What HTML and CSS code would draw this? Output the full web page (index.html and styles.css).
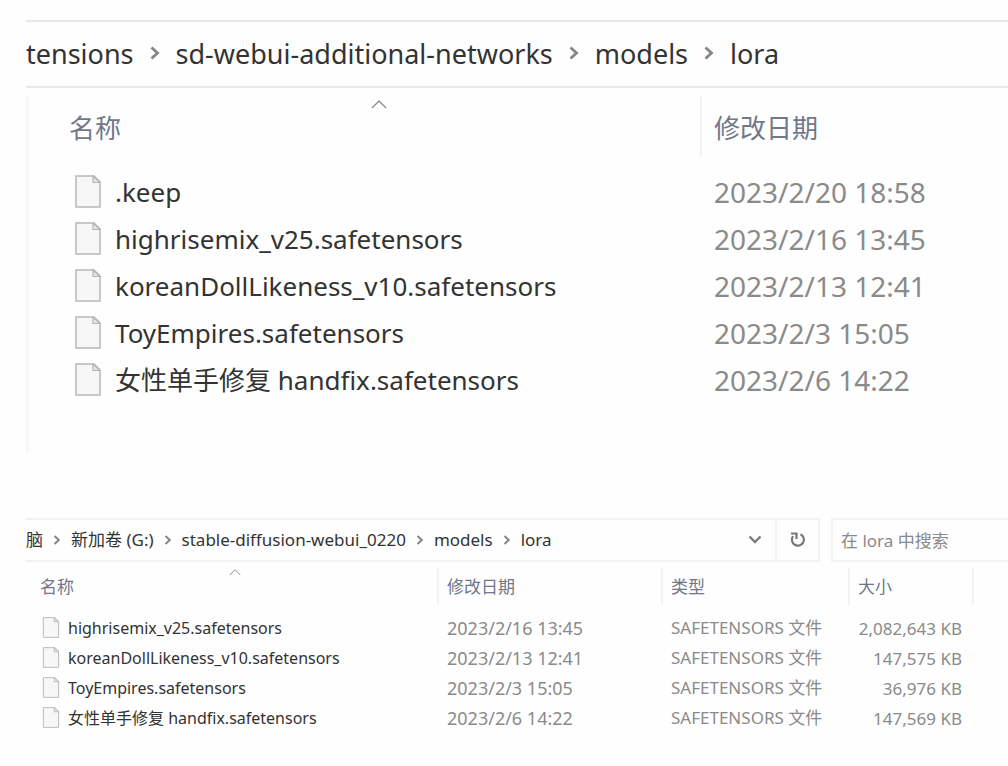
FILE: index.html
```html
<!DOCTYPE html>
<html lang="zh-CN">
<head>
<meta charset="utf-8">
<meta name="viewport" content="width=device-width, initial-scale=1">
<title>lora</title>
<link rel="stylesheet" href="styles.css">
</head>
<body>
<svg class="defs" aria-hidden="true">
  <symbol id="file" viewBox="0 0 26 33">
    <path d="M1 1H19L25 7V32H1Z" fill="#f7f7f7" stroke="#b8b8b8" stroke-width="1.5"/>
    <path d="M18 1V7.500H25Z" fill="#e6e6e6" stroke="#b4b4b4" stroke-width="1.2"/>
  </symbol>
  <symbol id="chev" viewBox="0 0 10 14">
    <path d="M1.500 1.500L7.500 7L1.500 12.500" fill="none" stroke="#858585" stroke-width="2.800"/>
  </symbol>
  <symbol id="sort" viewBox="0 0 16 10">
    <path d="M1 9L8 2L15 9" fill="none" stroke="#8a8a8a" stroke-width="1.300"/>
  </symbol>
</svg>

<main class="page">
  <section class="explorer large">
    <div class="toolbar">
      <nav class="address" aria-label="路径">
        <a href="#">tensions</a>
        <svg class="chev"><use href="#chev"/></svg>
        <a href="#">sd-webui-additional-networks</a>
        <svg class="chev"><use href="#chev"/></svg>
        <a href="#">models</a>
        <svg class="chev"><use href="#chev"/></svg>
        <a href="#">lora</a>
      </nav>
    </div>
    <div class="listing">
      <table class="files">
        <colgroup><col class="col-name"><col class="col-date"></colgroup>
        <thead>
          <tr>
            <th><button type="button" class="head"><svg class="sort"><use href="#sort"/></svg>名称</button></th>
            <th><button type="button" class="head">修改日期</button></th>
          </tr>
        </thead>
        <tbody>
          <tr><td class="name"><svg class="file"><use href="#file"/></svg><span>.keep</span></td><td class="date">2023/2/20 18:58</td></tr>
          <tr><td class="name"><svg class="file"><use href="#file"/></svg><span>highrisemix_v25.safetensors</span></td><td class="date">2023/2/16 13:45</td></tr>
          <tr><td class="name"><svg class="file"><use href="#file"/></svg><span>koreanDollLikeness_v10.safetensors</span></td><td class="date">2023/2/13 12:41</td></tr>
          <tr><td class="name"><svg class="file"><use href="#file"/></svg><span>ToyEmpires.safetensors</span></td><td class="date">2023/2/3 15:05</td></tr>
          <tr><td class="name"><svg class="file"><use href="#file"/></svg><span>女性单手修复 handfix.safetensors</span></td><td class="date">2023/2/6 14:22</td></tr>
        </tbody>
      </table>
    </div>
  </section>

  <section class="explorer small">
    <div class="toolbar">
      <nav class="address" aria-label="路径">
        <a href="#">脑</a>
        <svg class="chev"><use href="#chev"/></svg>
        <a href="#">新加卷 (G:)</a>
        <svg class="chev"><use href="#chev"/></svg>
        <a href="#">stable-diffusion-webui_0220</a>
        <svg class="chev"><use href="#chev"/></svg>
        <a href="#">models</a>
        <svg class="chev"><use href="#chev"/></svg>
        <a href="#">lora</a>
        <button type="button" class="history" aria-label="历史记录">
          <svg width="14" height="10" viewBox="0 0 14 10"><path d="M1.500 1.500L7 7L12.500 1.500" fill="none" stroke="#7a7a7a" stroke-width="2.400"/></svg>
        </button>
      </nav>
      <button type="button" class="refresh" aria-label="刷新">
        <svg width="18" height="18" viewBox="0 0 18 18"><path d="M11.500 3.300A6 6 0 1 1 4 5.200" fill="none" stroke="#777" stroke-width="2.200"/><path d="M2 2.500H7.500V8" fill="none" stroke="#777" stroke-width="2.200"/></svg>
      </button>
      <input class="search" type="search" aria-label="搜索" placeholder="在 lora 中搜索">
    </div>
    <div class="listing">
      <table class="files">
        <colgroup><col class="col-name"><col class="col-date"><col class="col-type"><col class="col-size"><col></colgroup>
        <thead>
          <tr>
            <th><button type="button" class="head"><svg class="sort"><use href="#sort"/></svg>名称</button></th>
            <th><button type="button" class="head">修改日期</button></th>
            <th><button type="button" class="head">类型</button></th>
            <th><button type="button" class="head">大小</button></th>
            <td><div class="head"></div></td>
          </tr>
        </thead>
        <tbody>
          <tr><td class="name"><svg class="file"><use href="#file"/></svg><span>highrisemix_v25.safetensors</span></td><td class="date">2023/2/16 13:45</td><td>SAFETENSORS 文件</td><td class="size">2,082,643 KB</td><td></td></tr>
          <tr><td class="name"><svg class="file"><use href="#file"/></svg><span>koreanDollLikeness_v10.safetensors</span></td><td class="date">2023/2/13 12:41</td><td>SAFETENSORS 文件</td><td class="size">147,575 KB</td><td></td></tr>
          <tr><td class="name"><svg class="file"><use href="#file"/></svg><span>ToyEmpires.safetensors</span></td><td class="date">2023/2/3 15:05</td><td>SAFETENSORS 文件</td><td class="size">36,976 KB</td><td></td></tr>
          <tr><td class="name"><svg class="file"><use href="#file"/></svg><span>女性单手修复 handfix.safetensors</span></td><td class="date">2023/2/6 14:22</td><td>SAFETENSORS 文件</td><td class="size">147,569 KB</td><td></td></tr>
        </tbody>
      </table>
    </div>
  </section>
</main>
</body>
</html>
```

FILE: styles.css
```css
* { box-sizing: border-box; }
body {
  margin: 0;
  background: #fefefe;
  color: #333;
  font-family: "Noto Sans", "Noto Sans CJK SC", sans-serif;
}
.defs { position: absolute; width: 0; height: 0; }
.page {
  display: flex;
  flex-direction: column;
  gap: 64px;
  padding: 20px 0 0 26px;
}
a { color: inherit; text-decoration: none; }
button {
  border: 0;
  padding: 0;
  background: none;
  color: inherit;
  font: inherit;
}
.toolbar { display: flex; }
.address {
  flex: 1;
  min-width: 0;
  display: flex;
  align-items: center;
  white-space: nowrap;
  line-height: 1;
  border: solid #e8e8e8;
  border-width: 2px 0;
}
.chev, .file { flex: none; }
.files {
  width: 100%;
  table-layout: fixed;
  border-collapse: collapse;
  white-space: nowrap;
  line-height: 1;
}
th, td { padding: 0; text-align: left; font-weight: 400; color: #8a8a8a; }
.head {
  display: block;
  position: relative;
  width: 100%;
  text-align: left;
  color: #70788a;
  border-left: 2px solid #f3f3f3;
}
th:first-child .head { border-left-color: transparent; }
.sort {
  position: absolute;
  top: 0;
  left: 50%;
  transform: translateX(-50%);
}
.name { color: #333; }
.name span { vertical-align: middle; }
.file { vertical-align: middle; }

.large { font-size: 26px; }
.large .address { height: 68px; gap: 16px; padding-bottom: 2px; font-size: 27px; }
.large .chev { width: 10px; height: 14px; }
.large .listing {
  margin-top: 8px;
  padding: 0 0 50px 26px;
  border-left: 3px solid #f8f8f8;
}
.large .col-name { width: 645px; }
.large .head { height: 61px; padding: 2px 0 0 12px; margin-bottom: 12px; }
.large .sort { width: 16px; height: 10px; top: 3px; }
.large tbody td { height: 47px; padding: 0 0 2px 14px; }
.large .date { font-size: 28px; }
.large tbody .name { padding-left: 20px; }
.large .file { width: 26px; height: 33px; margin-right: 14px; }

.small { font-size: 17px; }
.small .address { height: 44px; gap: 10px; padding-bottom: 1px; border-color: #f2f2f2; }
.small .chev { width: 8px; height: 10px; }
.history { width: 40px; height: 100%; margin-left: auto; }
.history svg, .refresh svg { display: block; margin: auto; }
.refresh { width: 45px; border: 2px solid #f2f2f2; }
.search {
  width: 177px;
  margin-left: 11px;
  padding: 0 8px;
  border: 2px solid #f2f2f2;
  border-right: 0;
  border-radius: 0;
  background: none;
  font: inherit;
  outline: 0;
}
.search::placeholder { color: #8a8a8a; opacity: 1; }
.small .listing { padding: 6px 0 0 4px; }
.small .col-name { width: 407px; }
.small .col-date { width: 224px; }
.small .col-type { width: 187px; }
.small .col-size { width: 124px; }
.small .head { height: 37px; padding: 0 0 0 8px; margin-bottom: 8px; }
.small .sort { width: 12px; height: 8px; }
.small tbody td { height: 30px; padding: 0 0 1px 10px; }
.small tbody .date { font-size: 18px; }
.small tbody .name { padding-left: 12px; font-size: 16px; }
.small tbody .size { padding: 0 10px 0 0; text-align: right; }
.small .file { width: 18px; height: 21px; margin-right: 8px; }
```
